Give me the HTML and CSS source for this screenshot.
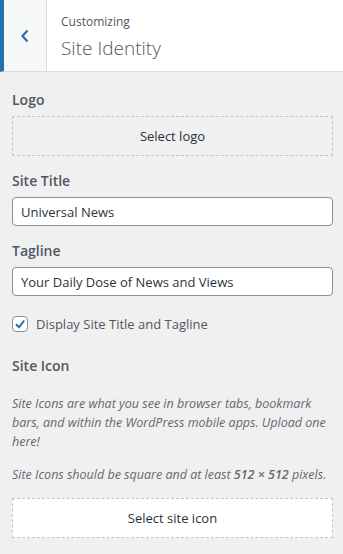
FILE: index.html
```html
<!DOCTYPE html>
<html lang="en">
<head>
  <meta charset="UTF-8">
  <meta name="viewport" content="width=device-width, initial-scale=1.0">
  <title>Customizing - Site Identity</title>
  <link rel="stylesheet" href="styles.css">
</head>
<body>
  <div class="panel-header">
    <button class="back-btn" aria-label="Back">
      <svg width="10" height="14" viewBox="0 0 10 14"><path d="M7.5 1.5 L2.5 7 L7.5 12.5" fill="none" stroke="#2271b1" stroke-width="2.2"/></svg>
    </button>
    <div class="panel-title">
      <span class="crumb">Customizing</span>
      <h2>Site Identity</h2>
    </div>
  </div>

  <div class="controls">
    <div class="control">
      <span class="control-label">Logo</span>
      <button class="placeholder">Select logo</button>
    </div>

    <div class="control">
      <label class="control-label" for="blogname">Site Title</label>
      <input type="text" id="blogname" value="Universal News">
    </div>

    <div class="control">
      <label class="control-label" for="blogdesc">Tagline</label>
      <input type="text" id="blogdesc" value="Your Daily Dose of News and Views">
    </div>

    <div class="control check-row">
      <span class="checkbox">
        <svg width="14" height="14" viewBox="0 0 14 14"><path d="M3 7.2 L6 10.2 L11.2 3.5" fill="none" stroke="#2271b1" stroke-width="2"/></svg>
      </span>
      <span>Display Site Title and Tagline</span>
    </div>

    <div class="control">
      <span class="control-label">Site Icon</span>
      <p class="desc first">Site Icons are what you see in browser tabs, bookmark bars, and within the WordPress mobile apps. Upload one here!</p>
      <p class="desc">Site Icons should be square and at least <strong>512 &times; 512</strong> pixels.</p>
      <button class="placeholder white">Select site icon</button>
    </div>
  </div>
</body>
</html>
```

FILE: styles.css
```css
body {
  margin: 0;
  font-family: "Open Sans", sans-serif;
  font-size: 13px;
  color: #3c434a;
  background: #f0f0f1;
}
.panel-header {
  display: flex;
  height: 71px;
  background: #fff;
  border-bottom: 1px solid #dcdcde;
  border-left: 4px solid #2271b1;
}
.back-btn {
  width: 43px;
  border: none;
  border-right: 1px solid #dcdcde;
  background: #f6f7f7;
  padding: 0;
  display: flex;
  align-items: center;
  justify-content: center;
}
.panel-title {
  padding: 13px 0 0 14px;
  color: #50575e;
}
.crumb {
  display: block;
  font-size: 12px;
  line-height: 18px;
}
.panel-title h2 {
  margin: 4px 0 0;
  font-size: 19px;
  font-weight: 300;
  line-height: 26px;
}
.controls {
  padding: 18px 10px 0 12px;
}
.control {
  margin-bottom: 15px;
}
.control-label {
  display: block;
  font-size: 14px;
  font-weight: 600;
  line-height: 20px;
  margin-bottom: 6px;
  color: #50575e;
}
.placeholder {
  display: block;
  width: 100%;
  height: 40px;
  border: 1px dashed #c3c4c7;
  background: transparent;
  font-family: inherit;
  font-size: 13px;
  color: #2c3338;
  padding: 0;
}
.placeholder.white {
  background: #fff;
}
input {
  box-sizing: border-box;
  width: 100%;
  height: 29px;
  padding: 0 8px;
  border: 1px solid #8c8f94;
  border-radius: 4px;
  font-family: inherit;
  font-size: 13px;
  color: #2c3338;
}
.check-row {
  display: flex;
  align-items: center;
  gap: 8px;
  margin: 19px 0 23px;
  color: #50575e;
}
.checkbox {
  width: 14px;
  height: 14px;
  border: 1px solid #8c8f94;
  border-radius: 4px;
  background: #fff;
  display: flex;
  align-items: center;
  justify-content: center;
}
.desc {
  margin: 0 0 14px;
  font-style: italic;
  font-size: 12.5px;
  line-height: 19px;
  color: #646970;
}
.desc.first {
  margin-top: 18px;
}
.desc strong {
  font-weight: 600;
}
```
